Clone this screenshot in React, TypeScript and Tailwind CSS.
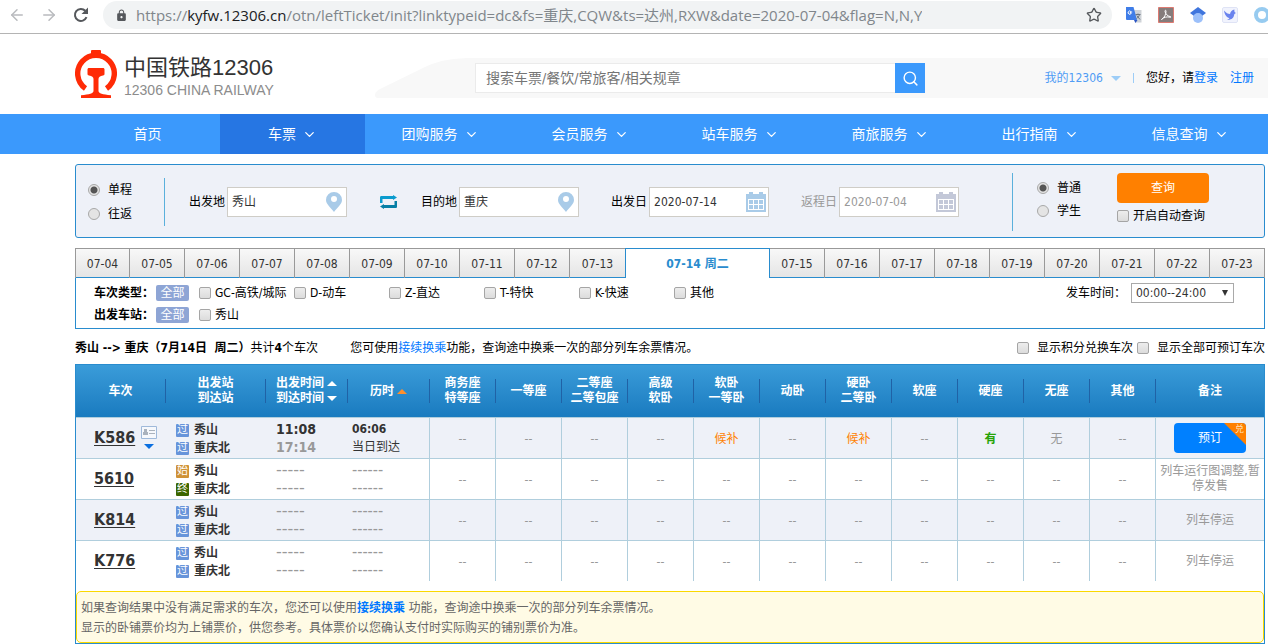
import React, { useState } from 'react';
import clsx from 'clsx';
import { ArrowLeft, ArrowRight, ChevronDown, Search, Star } from 'lucide-react';
import { MdLock } from 'react-icons/md';

const NAV_ITEMS = ['团购服务', '会员服务', '站车服务', '商旅服务', '出行指南', '信息查询'];

const DATES = Array.from({ length: 20 }, (_, i) => `07-${String(i + 4).padStart(2, '0')}`);

const TRAIN_TYPES = ['GC-高铁/城际', 'D-动车', 'Z-直达', 'T-特快', 'K-快速', '其他'];

const SEATS = [
  ['商务座', '特等座'],
  ['一等座'],
  ['二等座', '二等包座'],
  ['高级', '软卧'],
  ['软卧', '一等卧'],
  ['动卧'],
  ['硬卧', '二等卧'],
  ['软座'],
  ['硬座'],
  ['无座'],
  ['其他'],
];

type Train = {
  no: string;
  marks: [string, string];
  start?: string;
  arrive?: string;
  duration?: string;
  seats: Record<number, string>;
  remark?: string;
};

const TRAINS: Train[] = [
  { no: 'K586', marks: ['过', '过'], start: '11:08', arrive: '17:14', duration: '06:06', seats: { 4: '候补', 6: '候补', 8: '有', 9: '无' } },
  { no: '5610', marks: ['始', '终'], seats: {}, remark: '列车运行图调整,暂停发售' },
  { no: 'K814', marks: ['过', '过'], seats: {}, remark: '列车停运' },
  { no: 'K776', marks: ['过', '过'], seats: {}, remark: '列车停运' },
];

const MARK_COLORS: Record<string, string> = {
  过: 'bg-[#6794da]',
  始: 'bg-[#cf9236]',
  终: 'bg-[#3c6600]',
};

const SEAT_COLORS: Record<string, string> = {
  候补: 'text-[#ff8201]',
  有: 'text-[#26a306] font-bold',
};

const Check: React.FC<{ label: string; className?: string }> = ({ label, className = 'gap-1' }) => (
  <label className={clsx('flex items-center whitespace-nowrap', className)}>
    <input
      type="checkbox"
      className="size-3 shrink-0 appearance-none rounded-xs border border-[#a5a5a5] bg-linear-to-b from-[#ededed] to-[#dcdcdc] checked:bg-[#3b99fc]"
    />
    {label}
  </label>
);

const Radio: React.FC<{ name: string; label: string; defaultChecked?: boolean }> = ({ name, label, defaultChecked }) => (
  <label className="flex items-center gap-2">
    <input
      type="radio"
      name={name}
      defaultChecked={defaultChecked}
      className="size-3 shrink-0 appearance-none rounded-full border border-[#a8a8a8] bg-[#e4e4e4] checked:bg-[radial-gradient(circle,#555_0_3px,#e4e4e4_4px)]"
    />
    {label}
  </label>
);

const PinIcon = () => (
  <svg width="16" height="20" viewBox="0 0 16 20" className="shrink-0" fill="#a9cbe8">
    <path fillRule="evenodd" d="M8 0a8 8 0 0 1 8 8c0 4-4.500 7.500-8 12C4.500 15.500 0 12 0 8a8 8 0 0 1 8-8Zm0 4a3 3 0 1 0 0 6 3 3 0 0 0 0-6Z" />
  </svg>
);

const CalendarIcon: React.FC<{ color: string }> = ({ color }) => (
  <svg width="20" height="20" viewBox="0 0 20 20" className="shrink-0">
    <path d="M0 2h3V0h4v2h6V0h4v2h3v18H0z" fill={color} />
    <path d="M2 7h16v11H2z" fill="#fff" />
    {[3, 8, 13].map((x) => [8, 13].map((y) => <rect key={`${x}-${y}`} x={x} y={y} width="4" height="4" fill={color} />))}
  </svg>
);

const Field: React.FC<{ id: string; label: string; value: string; icon: React.ReactNode; muted?: boolean; className?: string }> = ({
  id, label, value, icon, muted, className = 'px-1',
}) => (
  <div className={clsx('flex shrink-0 items-center gap-0.5', muted && 'text-[#999]')}>
    <label htmlFor={id}>{label}</label>
    <div className={clsx('flex h-[30px] w-[120px] items-center border border-[#cfcdc7] bg-white', className)}>
      <input id={id} defaultValue={value} className={clsx('w-full min-w-0 outline-none', muted ? 'text-[#999]' : 'text-[#333]')} />
      {icon}
    </div>
  </div>
);

const BrowserBar = () => (
  <div className="flex h-[34px] items-start border-b border-[#b4b4b4] bg-white">
    <div className="flex h-[30px] w-[103px] shrink-0 items-center gap-3.5 pl-2">
      <button aria-label="后退"><ArrowLeft size={18} className="text-[#b9bbbe]" /></button>
      <button aria-label="前进"><ArrowRight size={18} className="text-[#b9bbbe]" /></button>
      <button aria-label="刷新">
        <svg width="18" height="18" viewBox="0 0 18 18">
          <path d="M14.500 11.200A6 6 0 1 1 13.300 4.800" fill="none" stroke="#55585c" strokeWidth="2" />
          <path d="M16 1.500V8H9.500z" fill="#55585c" />
        </svg>
      </button>
    </div>
    <div className="mt-px flex h-7 min-w-0 flex-1 items-center rounded-full bg-[#f1f3f4] pr-2.5 pl-3 font-['Open_Sans','Noto_Sans_CJK_SC',sans-serif] text-[15px] leading-6 text-[#80868b]">
      <MdLock size={13} className="mr-2 shrink-0 text-[#55585c]" />
      <span className="truncate">
        https://<span className="text-[#202124]">kyfw.12306.cn</span>/otn/leftTicket/init?linktypeid=dc&amp;fs=重庆,CQW&amp;ts=达州,RXW&amp;date=2020-07-04&amp;flag=N,N,Y
      </span>
      <button aria-label="收藏" className="ml-auto"><Star size={16} className="text-[#55585c]" /></button>
    </div>
    <div className="flex h-[30px] w-[156px] shrink-0 items-center gap-4 overflow-hidden pl-3.5">
      <button aria-label="翻译" className="shrink-0">
        <svg width="16" height="16" viewBox="0 0 16 16">
          <path d="M6 3h9.500v12.500H9z" fill="#cfd3d8" />
          <path d="M0 0h7.500L11 13H1a1 1 0 0 1-1-1z" fill="#3f7de8" />
          <path d="M8 13h3.500L9.500 16z" fill="#2a56c6" />
          <path d="M6.200 5H4.400v1.200h.8a1.600 1.600 0 1 1-.4-1.700" fill="none" stroke="#fff" />
          <path d="M9.500 7.500h5M12 6.500v1M13.500 7.500c-.5 2-1.500 3-3 4M10.800 8.500l3.200 4" fill="none" stroke="#6b7580" />
        </svg>
      </button>
      <button aria-label="PDF" className="shrink-0">
        <svg width="16" height="16" viewBox="0 0 16 16">
          <path d="M.5.500h15v15H.5z" fill="#857c7b" stroke="#dd7a72" />
          <path d="M3.500 12.500c3-2 4.500-5 4.500-8.500 0-1-1.300-1-1 .5.500 2.500 2.500 4.500 5 5 1.500.3 1 1 0 .7-3-.7-6-.2-8.500 2.300z" fill="none" stroke="#fff" />
        </svg>
      </button>
      <button aria-label="学术" className="shrink-0">
        <svg width="16" height="16" viewBox="0 0 16 16">
          <path d="M8 0 0 6l4 3h8l4-3z" fill="#3f75dd" />
          <circle cx="8" cy="11" r="5" fill="#9cc0fa" />
        </svg>
      </button>
      <button aria-label="飞鸟" className="shrink-0">
        <svg width="16" height="16" viewBox="0 0 16 16">
          <rect x=".5" y=".5" width="15" height="15" rx="1.500" fill="#f1f3fd" stroke="#dfe3f5" />
          <path d="M2 3.500c2 2.500 4 3.500 6 3.500C8.500 4.500 10 3 12.500 2.500c-.5 1.500 0 3 1.500 3.500-1.500.5-1.800 1-2 2.500-.5 3-3.500 4.500-7 4.500 1.200-.5 2-1 2.500-1.800C4.500 10.500 2.500 7.500 2 3.500Z" fill="#6a83ee" />
        </svg>
      </button>
      <button aria-label="扩展" className="shrink-0">
        <svg width="16" height="16" viewBox="0 0 16 16">
          <circle cx="8" cy="8" r="6" fill="none" stroke="#97cbf0" strokeWidth="4" />
        </svg>
      </button>
    </div>
  </div>
);

const Logo = () => (
  <a href="#" className="flex w-[300px] shrink-0 items-center gap-[7px]">
    <svg width="42" height="48" viewBox="0 0 42 48">
      <path d="M16 4V1a1 1 0 0 1 1-1h8a1 1 0 0 1 1 1v3z" fill="#ff2b06" />
      <path d="M10.500 38.500A18.300 18.300 0 1 1 31.500 38.500" fill="none" stroke="#ff2b06" strokeWidth="5.400" />
      <path d="M14 18h14c1 0 1.500.6 1.500 1.500V24c0 .8-.5 1.300-1.500 1.500-3 .7-4.500 1.500-4.500 3.500v12c0 2.500 4 3.500 12.500 4.200V48H6v-2.800C14.500 44.500 18.500 43.500 18.500 41V29c0-2-1.500-2.800-4.500-3.500-1-.2-1.500-.7-1.500-1.500v-4.500c0-.9.5-1.500 1.500-1.500Z" fill="#ff2b06" />
    </svg>
    <span className="pt-1 font-['Liberation_Sans','Noto_Sans_CJK_SC',sans-serif]">
      <span className="block text-[22px] leading-7 text-[#333]">中国铁路12306</span>
      <span className="block text-[14px] leading-4 text-[#8c8c8c]">12306 CHINA RAILWAY</span>
    </span>
  </a>
);

const Header = () => (
  <header className="flex h-20 items-end pb-4 pl-[75px]">
    <Logo />
    <svg width="100" height="40" viewBox="0 0 100 40" className="shrink-0">
      <path d="M0 37c0-3 2-4 5-6L50 9C65 2 78 0 100 0v40H3c-2 0-3-1-3-3Z" fill="#f8f8f8" />
    </svg>
    <div className="flex h-10 min-w-0 flex-1 items-center bg-[#f8f8f8] pr-3.5">
      <form className="flex w-[450px]">
        <input
          aria-label="搜索"
          placeholder="搜索车票/餐饮/常旅客/相关规章"
          className="h-[30px] min-w-0 flex-1 border border-r-0 border-[#ebebeb] bg-white px-2.5 text-[14px] outline-none placeholder:text-[#757575]"
        />
        <button type="button" aria-label="查找" className="flex size-[30px] items-center justify-center bg-[#3b99fc] text-white">
          <Search size={17} />
        </button>
      </form>
      <div className="ml-auto flex items-center whitespace-nowrap">
        <a href="#" className="text-[#4f9cf5]">我的12306</a>
        <span className="ml-2 border-x-5 border-t-5 border-x-transparent border-t-[#9dcdf7]" />
        <span className="mx-3 h-2.5 w-px bg-[#9dcdf7]" />
        <span>您好，请</span>
        <a href="#" className="text-[#0077ff]">登录</a>
        <a href="#" className="ml-3 text-[#0077ff]">注册</a>
      </div>
    </div>
  </header>
);

const Nav = () => (
  <nav className="flex h-10 bg-[#3b99fc] pr-[3px] pl-[75px] text-[14px] text-white">
    <a href="#" className="flex flex-[145] items-center justify-center">首页</a>
    <a href="#" className="flex flex-[145] items-center justify-center gap-1.5 bg-[#2676e3]">
      车票 <ChevronDown size={15} />
    </a>
    {NAV_ITEMS.map((item) => (
      <a key={item} href="#" className="flex flex-[150] items-center justify-center gap-1.5">
        {item} <ChevronDown size={15} />
      </a>
    ))}
  </nav>
);

const SearchForm = () => (
  <form className="mt-2.5 flex h-[74px] items-center rounded-[3px] border border-[#298cce] bg-[#eef1f8] pt-0.5 pl-3">
    <div className="flex h-12 w-[77px] flex-col justify-between border-r border-[#5ab0dc] pt-[3px] pb-[3px]">
      <Radio name="trip" label="单程" defaultChecked />
      <Radio name="trip" label="往返" />
    </div>
    <div className="ml-6 flex items-center">
      <Field id="from" label="出发地" value="秀山" icon={<PinIcon />} />
      <button type="button" aria-label="交换" className="mr-6 ml-[33px]">
        <svg width="17" height="14" viewBox="0 0 17 14">
          <path d="M0 8V2.500C0 1.500.5 1 1.500 1H13V0l4 2.500L13 5V4H2.500v4z" fill="#0a9bce" />
          <path d="M17 6v5.500c0 1-.5 1.500-1.500 1.500H4v1l-4-2.500L4 9v1h10.500V6z" fill="#077fa6" />
        </svg>
      </button>
      <Field id="to" label="目的地" value="重庆" icon={<PinIcon />} />
      <div className="ml-8 flex gap-8">
        <Field id="depart" label="出发日" value="2020-07-14" icon={<CalendarIcon color="#a9cbe8" />} className="pr-0.5 pl-1" />
        <Field id="return" label="返程日" value="2020-07-04" icon={<CalendarIcon color="#c3c8d8" />} className="pr-0.5 pl-1" muted />
      </div>
    </div>
    <div className="ml-auto flex h-[58px] w-[252px] gap-9 border-l border-[#5ab0dc] pl-6">
      <div className="flex flex-col gap-[5px] pt-1.5">
        <Radio name="kind" label="普通" defaultChecked />
        <Radio name="kind" label="学生" />
      </div>
      <div>
        <button type="button" className="h-[30px] w-[92px] rounded-[4px] bg-[#ff8000] text-white">查询</button>
        <Check label="开启自动查询" className="mt-1 gap-1" />
      </div>
    </div>
  </form>
);

const DateTabs = () => {
  const [active, setActive] = useState('07-14');

  return (
    <div className="mt-2.5 flex h-[30px]">
      {DATES.map((date, i) => (
        <button
          key={date}
          onClick={() => setActive(date)}
          className={clsx(
            'border-t',
            i === 0 && 'border-l',
            date === active
              ? 'flex-[145_145_145px] border-x border-[#298cce] bg-white font-bold text-[#298cce]'
              : 'flex-[55_55_55px] border-r border-[#999] bg-linear-to-b from-[#f8f8f8] to-[#e4e4e4] text-[#333] shadow-[inset_0_-1px_#298cce]',
            DATES[i + 1] === active && 'border-r-0'
          )}
        >
          {date === active ? `${date} 周二` : date}
        </button>
      ))}
    </div>
  );
};

const Filters = () => (
  <div className="flex h-[51px] justify-between border-x border-b border-[#298cce] pt-1 pr-[30px] pl-[18px] leading-[22px]">
    <div>
      <div className="flex items-center">
        <b className="w-[62px]">车次类型：</b>
        <button className="mr-2.5 h-4 w-[33px] rounded-xs bg-[#8ea5d5] leading-4 text-white">全部</button>
        {TRAIN_TYPES.map((type) => <Check key={type} label={type} className="w-[95px] gap-1" />)}
      </div>
      <div className="flex items-center">
        <b className="w-[62px]">出发车站：</b>
        <button className="mr-2.5 h-4 w-[33px] rounded-xs bg-[#8ea5d5] leading-4 text-white">全部</button>
        <Check label="秀山" />
      </div>
    </div>
    <div className="flex h-[22px] items-center gap-[5px]">
      <label htmlFor="time">发车时间：</label>
      <div className="grid w-[103px] items-center">
        <select id="time" className="col-start-1 row-start-1 h-5 appearance-none border border-[#a9a9a9] bg-white pl-1 leading-4 text-[#333]">
          <option>00:00--24:00</option>
        </select>
        <span className="pointer-events-none col-start-1 row-start-1 mr-1.5 justify-self-end border-x-3 border-t-6 border-x-transparent border-t-[#333]" />
      </div>
    </div>
  </div>
);

const Summary = () => (
  <div className="flex h-[35px] items-center pt-0.5">
    <p>
      <b>秀山 --&gt; 重庆（7月14日&nbsp; 周二）</b>共计<b>4</b>个车次
    </p>
    <p className="ml-8">
      您可使用<a href="#" className="text-[#0077ff]">接续换乘</a>功能，查询途中换乘一次的部分列车余票情况。
    </p>
    <div className="ml-auto flex gap-1">
      <Check label="显示积分兑换车次" className="gap-2" />
      <Check label="显示全部可预订车次" className="gap-2" />
    </div>
  </div>
);

const HeadCell: React.FC<{ children: React.ReactNode; last?: boolean }> = ({ children, last }) => (
  <th className="border-b border-[#b0cedd] p-0">
    <div className={clsx('flex h-6 items-center justify-center', !last && 'border-r border-[#2062a6]')}>
      <div>{children}</div>
    </div>
  </th>
);

const Stations: React.FC<{ marks: [string, string] }> = ({ marks }) => (
  <>
    {['秀山', '重庆北'].map((station, i) => (
      <div key={station} className="flex items-center gap-[5px] font-bold">
        <span className={clsx('flex size-[13px] items-center justify-center rounded-[1px] text-[11px] font-normal text-white', MARK_COLORS[marks[i]])}>
          {marks[i]}
        </span>
        {station}
      </div>
    ))}
  </>
);

const TrainRow: React.FC<{ train: Train; last: boolean }> = ({ train, last }) => {
  const line = last ? '' : 'border-b';

  return (
    <tr className={clsx('odd:bg-[#eef1f8]', last ? 'h-10' : 'h-[41px]')}>
      <td className={clsx('border-[#b0cedd] p-0 pl-[18px]', line)}>
        <div className="flex items-center gap-1.5">
          <a href="#" className="text-[16px] font-bold underline underline-offset-2">{train.no}</a>
          {train.start && (
            <svg width="16" height="24" viewBox="0 0 16 24">
              <path d="M.5.500h15v12H.5z" fill="#f6f8fc" stroke="#9fb9da" />
              <path d="M3 3h3v3h1v3H2V6h1zM8 4h6v1H8zM8 7h6v1H8z" fill="#aab2bd" />
              <path d="M3 18h10l-5 5z" fill="#0a6fe0" />
            </svg>
          )}
        </div>
      </td>
      <td className={clsx('border-[#b0cedd] p-0 pt-0.5 pl-2.5 leading-[18px]', line)}>
        <Stations marks={train.marks} />
      </td>
      <td className={clsx('border-[#b0cedd] p-0 pl-2.5 leading-[18px]', line)}>
        {train.start ? (
          <div className="text-[14px] font-bold">{train.start}<br /><span className="text-[#999]">{train.arrive}</span></div>
        ) : (
          <div className="font-['DejaVu_Sans',sans-serif] text-[16px] text-[#999]">-----<br />-----</div>
        )}
      </td>
      <td className={clsx('border-r border-[#b0cedd] p-0 pl-1 leading-[18px]', line)}>
        {train.duration ? (
          <>
            <div className="font-bold">{train.duration}</div>
            <div>当日到达</div>
          </>
        ) : (
          <div className="text-[16px] text-[#999]">------<br />------</div>
        )}
      </td>
      {SEATS.map((seat, i) => (
        <td key={seat.join()} className={clsx('border-r border-[#b0cedd] p-0 pt-0.5 text-center', line, SEAT_COLORS[train.seats[i]] ?? 'text-[#999]')}>
          {train.seats[i] ?? '--'}
        </td>
      ))}
      <td className={clsx('border-[#b0cedd] p-0 px-1 text-center leading-[15px] text-[#999]', line)}>
        {train.remark ?? (
          <button className="relative h-[30px] w-[72px] overflow-hidden rounded-[4px] bg-[#0080ff] align-middle text-white">
            预订
            <span className="absolute top-0 right-0 size-[22px] bg-[#ff8000] pr-0.5 text-right text-[9px] leading-3 text-[#ffe2bd] [clip-path:polygon(0_0,100%_0,100%_100%)]">
              兑
            </span>
          </button>
        )}
      </td>
    </tr>
  );
};

const Results = () => (
  <div className="border border-[#298cce]">
    <table className="w-full table-fixed border-separate border-spacing-0 text-[#333]">
      <colgroup>
        <col className="w-[90px]" />
        <col className="w-[100px]" />
        <col className="w-[82px]" />
        <col className="w-[82px]" />
        {SEATS.map((seat) => <col key={seat.join()} className="w-[66px]" />)}
        <col />
      </colgroup>
      <thead>
        <tr className="h-[53px] bg-linear-to-b from-[#3a9cd9] to-[#187abf] leading-[15px] text-white">
          <HeadCell>车次</HeadCell>
          <HeadCell>出发站<br />到达站</HeadCell>
          <HeadCell>
            {['出发时间', '到达时间'].map((text, i) => (
              <button key={text} className="flex items-center gap-[3px]">
                {text}
                <span className={clsx('border-x-5 border-x-transparent', i === 0 ? 'border-b-5 border-b-white' : 'border-t-5 border-t-white')} />
              </button>
            ))}
          </HeadCell>
          <HeadCell>
            <button className="flex items-center gap-[3px]">
              历时
              <span className="border-x-5 border-b-5 border-x-transparent border-b-[#ff8f2c]" />
            </button>
          </HeadCell>
          {SEATS.map((seat) => (
            <HeadCell key={seat.join()}>
              {seat.map((text) => <div key={text} className="whitespace-nowrap">{text}</div>)}
            </HeadCell>
          ))}
          <HeadCell last>备注</HeadCell>
        </tr>
      </thead>
      <tbody>
        {TRAINS.map((train, i) => <TrainRow key={train.no} train={train} last={i === TRAINS.length - 1} />)}
      </tbody>
    </table>

    {/* Tips */}
    <div className="mt-2.5 rounded-[5px] border border-[#fbd800] bg-[#fffbe5] px-1 pt-1.5 pb-1 leading-5 text-[#666]">
      <p>
        如果查询结果中没有满足需求的车次，您还可以使用<a href="#" className="font-bold text-[#0077ff]">接续换乘</a> 功能，查询途中换乘一次的部分列车余票情况。
      </p>
      <p>显示的卧铺票价均为上铺票价，供您参考。具体票价以您确认支付时实际购买的铺别票价为准。</p>
    </div>
  </div>
);

const App: React.FC = () => (
  <div className="min-h-screen bg-white font-['DejaVu_Sans_Condensed','Noto_Sans','Noto_Sans_CJK_SC',sans-serif] text-[12px] leading-[18px] text-black">
    <BrowserBar />
    <Header />
    <Nav />
    <main className="mr-[3px] ml-[75px]">
      <SearchForm />
      <DateTabs />
      <Filters />
      <Summary />
      <Results />
    </main>
  </div>
);

export default App;
